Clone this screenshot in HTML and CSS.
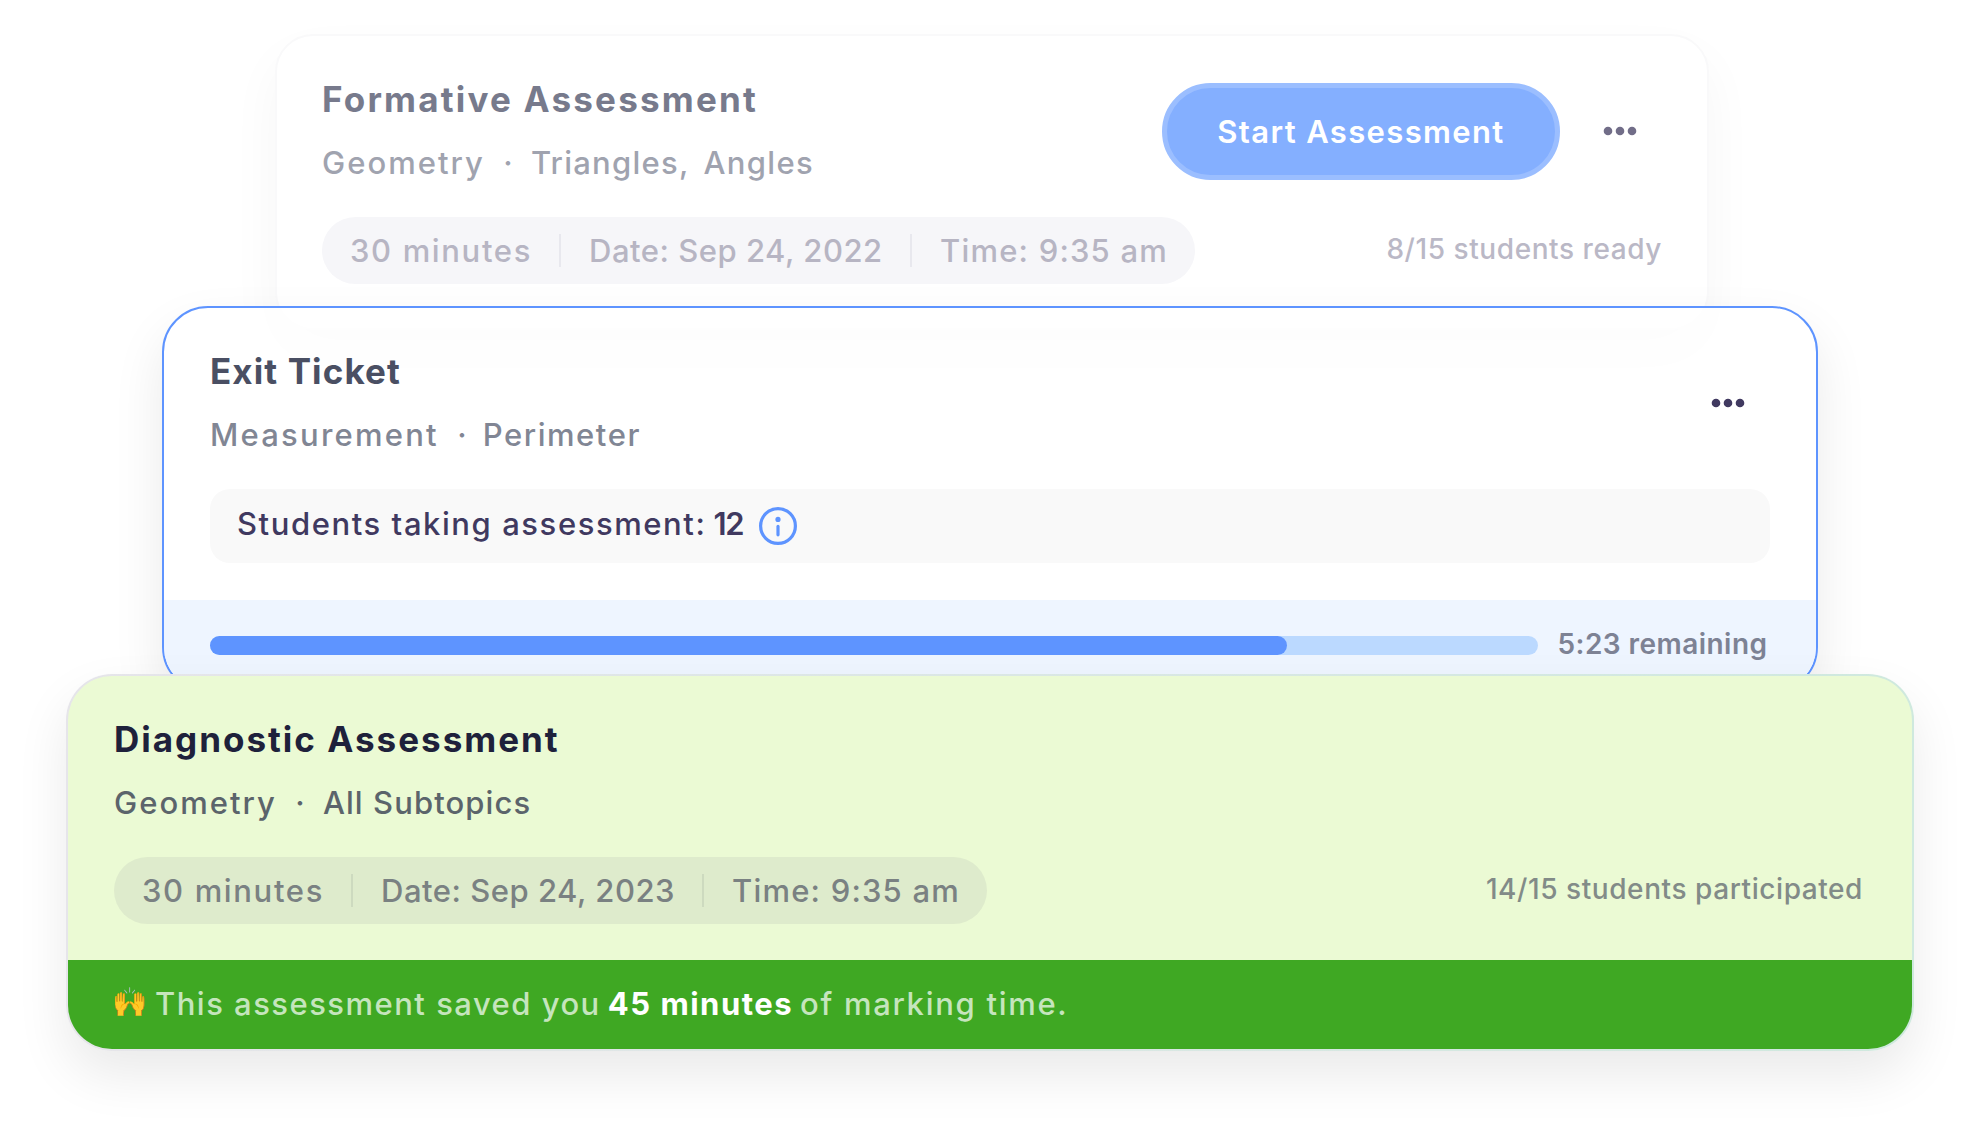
FILE: index.html
```html
<!DOCTYPE html>
<html lang="en">
<head>
<meta charset="utf-8">
<title>Assessments</title>
<link rel="stylesheet" href="styles.css">
</head>
<body>
<main class="stack">

  <article class="card card-ready">
    <div class="card-body">
      <header class="card-head">
        <div>
          <h2 class="title title-formative">Formative Assessment</h2>
          <p class="topics"><span class="t-geometry">Geometry</span><span class="dot">·</span><span class="t-triangles">Triangles,</span><span class="t-angles">Angles</span></p>
        </div>
        <div class="actions">
          <button class="start" type="button">Start Assessment</button>
          <svg class="more" width="36" height="12" viewBox="0 0 36 12"><circle cx="6" cy="6" r="4.3"/><circle cx="18" cy="6" r="4.3"/><circle cx="30" cy="6" r="4.3"/></svg>
        </div>
      </header>
      <div class="meta">
        <div class="pill"><span class="duration">30 minutes</span><i class="divider"></i><span class="date">Date: Sep 24, 2022</span><i class="divider"></i><span class="time">Time: 9:35 am</span></div>
        <span class="count">8/15 students ready</span>
      </div>
    </div>
  </article>

  <article class="card card-active">
    <div class="card-body">
      <header class="card-head">
        <div>
          <h2 class="title title-exit">Exit Ticket</h2>
          <p class="topics"><span class="t-measurement">Measurement</span><span class="dot">·</span><span class="t-perimeter">Perimeter</span></p>
        </div>
        <div class="actions">
          <svg class="more" width="36" height="12" viewBox="0 0 36 12"><circle cx="6" cy="6" r="4.3"/><circle cx="18" cy="6" r="4.3"/><circle cx="30" cy="6" r="4.3"/></svg>
        </div>
      </header>
      <div class="status">
        <span class="status-text">Students taking assessment:</span><b class="status-number">12</b>
        <svg class="info" width="38" height="38" viewBox="0 0 38 38"><circle cx="19" cy="19" r="17.4" fill="none" stroke="#5e94ff" stroke-width="3.2"/><circle cx="19" cy="12.4" r="2.6" fill="#5e94ff"/><path d="M19 19.4v8.4" stroke="#5e94ff" stroke-width="3.2" stroke-linecap="round"/></svg>
      </div>
    </div>
    <footer class="progress">
      <div class="track"><div class="fill" style="width: 81.1%"></div></div>
      <span class="remaining">5:23 remaining</span>
    </footer>
  </article>

  <article class="card card-done">
    <div class="card-body">
      <header class="card-head">
        <div>
          <h2 class="title title-diagnostic">Diagnostic Assessment</h2>
          <p class="topics"><span class="t-geometry">Geometry</span><span class="dot">·</span><span class="t-all">All Subtopics</span></p>
        </div>
      </header>
      <div class="meta">
        <div class="pill"><span class="duration">30 minutes</span><i class="divider"></i><span class="date">Date: Sep 24, 2023</span><i class="divider"></i><span class="time">Time: 9:35 am</span></div>
        <span class="count">14/15 students participated</span>
      </div>
    </div>
    <footer class="saved"><span class="emoji">🙌</span><span class="saved-lead">This assessment saved you</span><b class="saved-time">45 minutes</b><span class="saved-tail">of marking time.</span></footer>
  </article>

</main>
</body>
</html>
```
FILE: styles.css
```css
* { box-sizing: border-box; }

body {
  margin: 0;
  background: #fff;
  font-family: Inter, "Liberation Sans", sans-serif;
  font-weight: 500;
  font-size: 31px;
  line-height: 48px;
}

.stack {
  height: 1147px;
  padding-top: 34px;
  overflow: hidden;
}

.card {
  position: relative;
  border: 2px solid transparent;
  border-radius: 46px;
  box-shadow: 0 24px 52px rgba(0, 0, 0, 0.085);
}

.card-body { padding: 36px 46px 0; }

.card-head {
  display: flex;
  justify-content: space-between;
  height: 145.3px;
}

.title {
  margin: 0 0 13.4px;
  font-size: 35px;
  font-weight: 700;
  line-height: 54px;
  white-space: nowrap;
}
.title-formative { letter-spacing: 2.2px; }
.title-exit { letter-spacing: 1.1px; }
.title-diagnostic { letter-spacing: 2px; }

.topics {
  display: flex;
  margin: 0;
  white-space: nowrap;
}
.dot { width: 46px; text-align: center; }
.t-geometry { letter-spacing: 2.02px; }
.t-triangles { letter-spacing: 1.24px; margin-right: 14px; }
.t-angles { letter-spacing: 1.33px; }
.t-measurement { letter-spacing: 2.23px; }
.t-perimeter { letter-spacing: 1.53px; margin-left: -2px; }
.t-all { letter-spacing: 1.09px; }

.actions {
  display: flex;
  align-items: center;
  height: 97px;
  margin-top: 11px;
}

.start {
  width: 398px;
  height: 97px;
  padding: 0;
  border: 5px solid #9bbeff;
  border-radius: 49px;
  background: #84afff;
  color: #fff;
  font: 600 31px/48px Inter, sans-serif;
  letter-spacing: 1.36px;
}

.more { margin: -2px 23px 0 42px; }

.meta {
  display: flex;
  justify-content: space-between;
  align-items: center;
  height: 66.4px;
}

.pill {
  display: flex;
  align-items: center;
  width: 873px;
  height: 66.4px;
  padding: 2px 0 0 28px;
  border-radius: 34px;
  white-space: nowrap;
}
.duration { width: 209px; letter-spacing: 1.65px; }
.date { width: 349px; padding-left: 28px; letter-spacing: 0.52px; }
.time { padding-left: 28px; letter-spacing: 1.2px; }
.divider { width: 2px; height: 33px; margin-top: -2px; }

.count {
  padding-bottom: 3px;
  font-size: 28px;
  letter-spacing: 0.57px;
  white-space: nowrap;
}

/* Waiting to start */
.card-ready {
  width: 1434px;
  height: 296px;
  margin-left: 275px;
  padding-right: 0;
  border-color: #f9f9fa;
  border-radius: 38px;
  background: #fff;
  box-shadow: 0 24px 52px rgba(0, 0, 0, 0.04);
}
.card-ready .card-body { padding-left: 45px; }
.card-ready .title { color: #777a8c; }
.card-ready .topics { color: #a0a3af; }
.card-ready .more { fill: #716d88; }
.card-ready .pill { background: #f6f6f9; color: #b7b5c3; }
.card-ready .divider { background: #e8e8ee; }
.card-ready .count { color: #bab8c6; margin-right: -1px; }

/* In progress */
.card-active {
  width: 1656px;
  height: 387px;
  margin: -24px 0 0 162px;
  border-color: #5e94ff;
  background: rgba(255, 255, 255, 0.75);
  background-clip: padding-box;
  overflow: hidden;
}
.card-active .card-body { height: 292px; }
.card-active .title { color: #4a4f63; }
.card-active .topics { color: #818694; }
.card-active .more { margin-right: 24px; fill: #403960; }

.status {
  display: flex;
  align-items: center;
  height: 73.3px;
  padding-left: 27px;
  border-radius: 20px;
  background: #f9f9f9;
  color: #403960;
  white-space: nowrap;
}
.status-text { padding-bottom: 3px; letter-spacing: 1.57px; }
.status-number { margin-left: 7px; padding-bottom: 3px; font-weight: 600; letter-spacing: -1.2px; }
.info { margin-left: 16px; }

.progress {
  display: flex;
  align-items: center;
  height: 91px;
  padding: 0 46px;
  background: #eef5ff;
}
.track {
  width: 1327.5px;
  height: 18.6px;
  border-radius: 10px;
  background: #bbd9ff;
}
.fill {
  height: 100%;
  border-radius: 10px;
  background: #5e94ff;
}
.remaining {
  margin-left: 20px;
  padding-bottom: 4px;
  color: #7d8294;
  font-size: 28px;
  font-weight: 600;
  letter-spacing: 0.45px;
  white-space: nowrap;
}

/* Finished */
.card-done {
  width: 1848px;
  height: 377px;
  margin: -19px 0 0 66px;
  background:
    linear-gradient(#ebfad4 0 284.3px, #3fa823 284.3px) padding-box,
    linear-gradient(90deg, #e6e5ea, #cfe9de) border-box;
}
.card-done .card-body { height: 284.3px; }
.card-done .title { color: #1e213b; }
.card-done .topics { color: #5b646b; }
.card-done .pill { background: #deebcc; color: #7a8182; }
.card-done .divider { background: #cddabf; }
.card-done .count { margin-right: 3px; color: #828b88; }

.saved {
  display: flex;
  align-items: center;
  height: 88.7px;
  padding: 0 0 2px 44px;
  color: #c5e5bd;
  white-space: nowrap;
}
.emoji { width: 43px; padding-bottom: 3px; font-size: 28.5px; }
.saved-lead { letter-spacing: 1.48px; }
.saved-time { margin-left: 7px; color: #fff; letter-spacing: 1.5px; }
.saved-tail { margin-left: 7px; letter-spacing: 1.7px; }
```
